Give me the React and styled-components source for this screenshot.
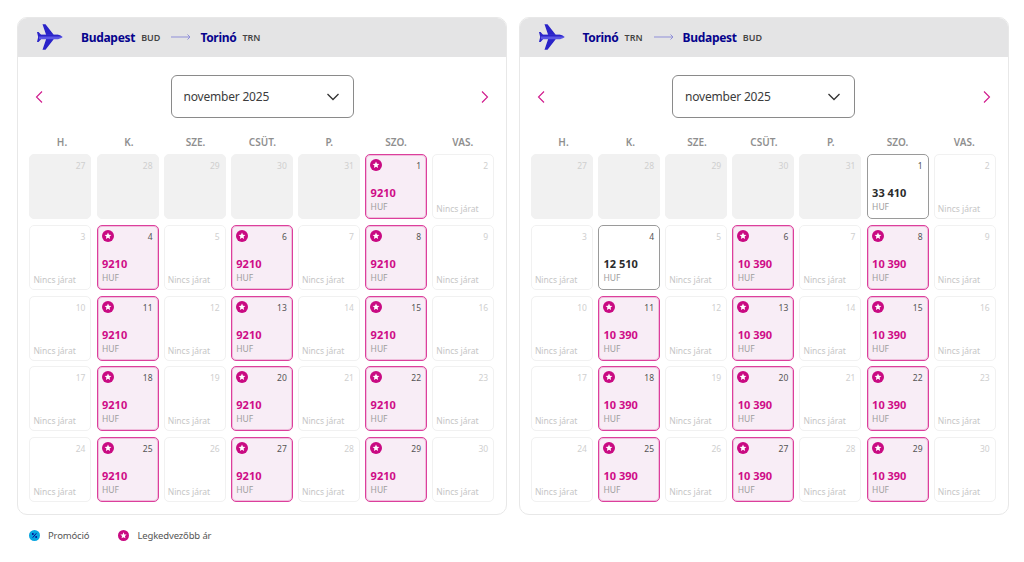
import React from 'react';
import styled, { createGlobalStyle } from 'styled-components';

const GlobalStyle = createGlobalStyle`
  html, body {
    margin: 0;
    padding: 0;
    background: #fff;
    font-family: "Noto Sans", "Open Sans", sans-serif;
  }
`;

const Page = styled.div`
  width: 1024px;
  height: 562px;
  box-sizing: border-box;
  padding: 17px 15px 0 17px;
  overflow: hidden;
`;

const Panels = styled.div`
  display: flex;
  gap: 11.5px;
`;

const Panel = styled.section`
  width: 490px;
  height: 498px;
  box-sizing: border-box;
  border: 1px solid #e8e8e8;
  border-radius: 10px;
  overflow: hidden;
`;

const Header = styled.header`
  height: 40px;
  margin: -1px -1px 0;
  background: #e4e4e5;
  display: flex;
  align-items: center;
  padding: 0 0 0 20px;
`;

const Plane = styled.svg`
  width: 26px;
  height: 26px;
  margin-right: 18px;
`;

const City = styled.span`
  font-size: 12px;
  font-weight: 700;
  letter-spacing: -0.3px;
  color: #06038d;
`;

const Code = styled.span`
  font-size: 9px;
  font-weight: 600;
  color: #444;
  margin-left: 6px;
`;

const Arrow = styled.svg`
  width: 20px;
  height: 8px;
  margin: 0 9px 0 11px;
`;

const MonthRow = styled.div`
  display: flex;
  align-items: center;
  justify-content: space-between;
  padding: 18px 15px 0 15px;
`;

const NavButton = styled.svg`
  width: 12px;
  height: 14px;
`;

const MonthSelect = styled.div`
  width: 183px;
  height: 43px;
  box-sizing: border-box;
  border: 1px solid #8a8a8a;
  border-radius: 6px;
  display: flex;
  align-items: center;
  justify-content: space-between;
  padding: 0 13px 0 12px;
  font-size: 12px;
  letter-spacing: -0.2px;
  color: #3c3c3c;
`;

const Grid = styled.div`
  display: grid;
  grid-template-columns: repeat(7, 62px);
  column-gap: 5.15px;
  padding: 0 0 0 11.4px;
`;

const Weekdays = styled(Grid)`
  margin-top: 14px;
  height: 20px;
  align-items: center;
  column-gap: 4.8px;
  padding-left: 13px;
`;

const Weekday = styled.div`
  text-align: center;
  font-size: 10px;
  font-weight: 600;
  color: #8f8f8f;
`;

const Days = styled(Grid)`
  margin-top: 2px;
  grid-auto-rows: 65px;
  row-gap: 5.8px;
`;

const kindStyles = {
  past: 'background: #f1f1f1; border: 1px solid #f1f1f1;',
  empty: 'background: #fff; border: 1px solid #f1f1f1;',
  promo: 'background: #f8edf6; border: 1px solid #dc3f9c; box-shadow: inset 0 0 0 1px rgba(222, 80, 160, 0.3);',
  plain: 'background: #fff; border: 1px solid #9a9a9a;'
};

const Cell = styled.div`
  position: relative;
  box-sizing: border-box;
  border-radius: 5px;
  ${(props) => kindStyles[props.kind]}
`;

const DayNumber = styled.span`
  position: absolute;
  top: 5px;
  right: 5px;
  font-size: 8.5px;
  line-height: 12px;
  color: ${(props) => (props.active ? '#555' : '#cfcfcf')};
`;

const StarSlot = styled.span`
  position: absolute;
  top: 4px;
  left: 4px;
  display: flex;
`;

const Price = styled.div`
  position: absolute;
  left: 4.5px;
  top: 30px;
  font-size: 11px;
  line-height: 15px;
  font-weight: 700;
  color: ${(props) => (props.promo ? '#cf0c87' : '#2b2b2b')};
`;

const Currency = styled.div`
  position: absolute;
  left: 4.5px;
  top: 46px;
  font-size: 8.5px;
  line-height: 12px;
  color: #9d9d9d;
`;

const NoFlight = styled.div`
  position: absolute;
  left: 3px;
  bottom: 3px;
  font-size: 8.5px;
  line-height: 12px;
  white-space: nowrap;
  color: #c6c6c6;
`;

const Legend = styled.footer`
  display: flex;
  align-items: center;
  margin-top: 12px;
  padding-left: 12px;
  height: 16px;
`;

const LegendItem = styled.div`
  display: flex;
  align-items: center;
  gap: 8px;
  font-size: 9.5px;
  letter-spacing: -0.15px;
  color: #555;
  margin-right: 29px;
`;

const PlaneIcon = () => (
  <Plane viewBox="0 0 26 26">
    <path d="M5.500 0.300 L8.500 0.300 L16.500 10.500 L16.500 15.500 L8.500 25.700 L5.500 25.700 L9 15.500 L9 10.500 Z" fill="#2a23c8" />
    <path d="M0 8 L1.600 8 L4 10.800 L4 15.200 L1.600 18 L0 18 L1.200 13 Z" fill="#2a23c8" />
    <path d="M2 10.800 H21 Q25.500 12 25.500 13 Q25.500 14 21 15.200 H2 Z" fill="#5a56e4" />
    <path d="M2 10.800 H21 Q23.500 11.600 24.500 12.500 H2 Z" fill="#2a23c8" />
  </Plane>
);

const StarBadge = ({ size = 12 }) => (
  <svg width={size} height={size} viewBox="0 0 12 12">
    <circle cx="6" cy="6" r="6" fill="#c90a82" />
    <path d="M6 2.500 L7 4.800 L9.400 5 L7.600 6.600 L8.100 9 L6 7.800 L3.900 9 L4.400 6.600 L2.600 5 L5 4.800 Z" fill="#fff" />
  </svg>
);

const PromoBadge = () => (
  <svg width="11" height="11" viewBox="0 0 12 12">
    <circle cx="6" cy="6" r="6" fill="#08a5e0" />
    <path d="M8 3.600 L4 8.400" stroke="#06038d" strokeWidth="1" />
    <circle cx="4.200" cy="4.400" r="1" fill="#06038d" />
    <circle cx="7.800" cy="7.600" r="1" fill="#06038d" />
  </svg>
);

const Route = ({ from, fromCode, to, toCode }) => (
  <Header>
    <PlaneIcon />
    <City>{from}</City>
    <Code>{fromCode}</Code>
    <Arrow viewBox="0 0 20 8">
      <path d="M0 4 H19 M16.500 1.500 L19 4 L16.500 6.500" fill="none" stroke="#8f8fd8" strokeWidth="1" />
    </Arrow>
    <City>{to}</City>
    <Code>{toCode}</Code>
  </Header>
);

const WEEKDAYS = ['H.', 'K.', 'SZE.', 'CSÜT.', 'P.', 'SZO.', 'VAS.'];

const leadingDays = [27, 28, 29, 30, 31];

const DayCell = ({ day, price, promo }) => {
  if (!price) {
    return (
      <Cell kind="empty">
        <DayNumber>{day}</DayNumber>
        <NoFlight>Nincs járat</NoFlight>
      </Cell>
    );
  }

  return (
    <Cell kind={promo ? 'promo' : 'plain'}>
      {promo && <StarSlot><StarBadge /></StarSlot>}
      <DayNumber active>{day}</DayNumber>
      <Price promo={promo}>{price}</Price>
      <Currency>HUF</Currency>
    </Cell>
  );
};

const Calendar = ({ route, prices }) => {
  const days = Array.from({ length: 30 }, (_, index) => index + 1);

  return (
    <Panel>
      <Route {...route} />
      <MonthRow>
        <NavButton viewBox="0 0 12 14">
          <path d="M9 1.500 L3.500 7 L9 12.500" fill="none" stroke="#d0188c" strokeWidth="1.100" />
        </NavButton>
        <MonthSelect>
          november 2025
          <svg width="14" height="8" viewBox="0 0 14 8">
            <path d="M1.500 1 L7 6.500 L12.500 1" fill="none" stroke="#333" strokeWidth="1.300" />
          </svg>
        </MonthSelect>
        <NavButton viewBox="0 0 12 14">
          <path d="M3 1.500 L8.500 7 L3 12.500" fill="none" stroke="#d0188c" strokeWidth="1.100" />
        </NavButton>
      </MonthRow>
      <Weekdays>
        {WEEKDAYS.map((name) => <Weekday key={name}>{name}</Weekday>)}
      </Weekdays>
      <Days>
        {leadingDays.map((day) => (
          <Cell kind="past" key={day}><DayNumber>{day}</DayNumber></Cell>
        ))}
        {days.map((day) => {
          const entry = prices[day];
          return (
            <DayCell
              key={day}
              day={day}
              price={entry && entry.price}
              promo={entry && entry.promo}
            />
          );
        })}
      </Days>
    </Panel>
  );
};

const promoDays = [4, 6, 8, 11, 13, 15, 18, 20, 22, 25, 27, 29];

const buildPrices = (price) => {
  const prices = {};
  promoDays.forEach((day) => {
    prices[day] = { price, promo: true };
  });
  return prices;
};

const outbound = { ...buildPrices('9210'), 1: { price: '9210', promo: true } };
const inbound = {
  ...buildPrices('10 390'),
  1: { price: '33 410', promo: false },
  4: { price: '12 510', promo: false }
};

const App = () => (
  <Page>
    <GlobalStyle />
    <Panels>
      <Calendar
        route={{ from: 'Budapest', fromCode: 'BUD', to: 'Torinó', toCode: 'TRN' }}
        prices={outbound}
      />
      <Calendar
        route={{ from: 'Torinó', fromCode: 'TRN', to: 'Budapest', toCode: 'BUD' }}
        prices={inbound}
      />
    </Panels>
    <Legend>
      <LegendItem><PromoBadge />Promóció</LegendItem>
      <LegendItem><StarBadge size={11} />Legkedvezőbb ár</LegendItem>
    </Legend>
  </Page>
);

export default App;
